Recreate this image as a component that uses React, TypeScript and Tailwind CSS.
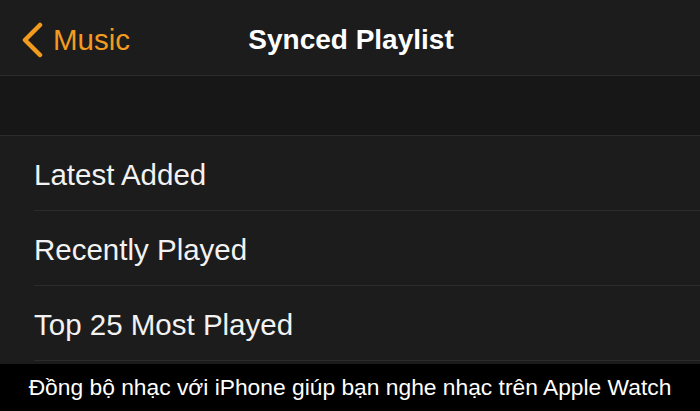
import React from "react";

const rows = ["Latest Added", "Recently Played", "Top 25 Most Played"];

const App: React.FC = () => {
  return (
    <div
      className="w-[700px] h-[411px] overflow-hidden bg-[#1b1b1b] flex flex-col"
      style={{ fontFamily: '"Liberation Sans", Arial, sans-serif' }}
    >
      {/* nav bar */}
      <div className="relative h-[76px] shrink-0 flex items-center pt-[4px] border-b border-[#2c2c2c] bg-[#1c1c1c]">
        <div className="flex items-center pl-[20px] text-[#f29b1f]">
          <svg width="24" height="36" viewBox="0 0 24 36" className="mr-[9px]">
            <path d="M20 3 L5 18 L20 33" fill="none" stroke="#f29b1f" strokeWidth="4.5" strokeLinecap="round" strokeLinejoin="round" />
          </svg>
          <span className="text-[29.5px] leading-none">Music</span>
        </div>
        <div className="absolute left-0 right-0 text-center pl-[2px] text-white font-bold text-[28px] leading-none pointer-events-none">
          Synced Playlist
        </div>
      </div>

      {/* spacer band */}
      <div className="h-[60px] shrink-0 bg-[#171717] border-b border-[#2c2c2c]" />

      {/* list */}
      <div className="flex flex-col bg-[#1c1c1c]">
        {rows.map((r) => (
          <div key={r} className="pl-[34px]">
            <div className="h-[75px] flex items-center pt-[3px] border-b border-[#2c2c2c] text-[#f2f2f2] text-[29.5px] leading-none">
              {r}
            </div>
          </div>
        ))}
      </div>

      {/* caption */}
      <div className="flex-1 bg-black flex items-center justify-center text-white text-[22.8px] leading-none mt-[3px]">
        Đồng bộ nhạc với iPhone giúp bạn nghe nhạc trên Apple Watch
      </div>
    </div>
  );
};

export default App;
